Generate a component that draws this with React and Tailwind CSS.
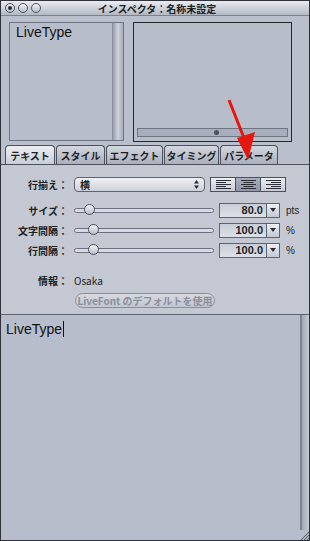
const jp = "font-['Noto_Sans_CJK_JP','Noto_Sans',sans-serif]";

function Tab({ label, active, w }) {
  return (
    <div
      className={`h-[19px] ${w} mr-px rounded-t-[4px] border border-b-0 border-[#4b505c] flex items-center justify-center text-[10px] font-bold text-[#1d1f24] ${
        active
          ? "bg-gradient-to-b from-[#eceef2] to-[#c9cdd7]"
          : "bg-gradient-to-b from-[#d3d7df] to-[#a9afbc]"
      }`}
    >
      {label}
    </div>
  );
}

function SliderRow({ label, value, unit, knob }) {
  return (
    <div className="flex items-center h-[20px]">
      <div className="w-[73px] text-right pr-[6px] text-[10px] font-bold text-[#1d1f24]">{label}</div>
      <div className="relative w-[140px] h-[5px] rounded-full border border-[#6b7080] bg-[#d7dae2]">
        <div
          className="absolute top-[-5px] w-[11px] h-[11px] rounded-full border border-[#4b505c] bg-gradient-to-b from-[#f4f5f8] to-[#b9beca]"
          style={{ left: knob }}
        />
      </div>
      <div className="ml-[5px] flex h-[15px] border border-[#5e6372] bg-[#d2d6df]">
        <div className="w-[46px] text-right pr-[3px] text-[11px] font-bold leading-[13px] text-[#1d1f24] font-['Liberation_Sans',sans-serif] bg-gradient-to-b from-[#c9cdd7] to-[#dcdfe6]">
          {value}
        </div>
        <div className="w-[13px] border-l border-[#5e6372] flex items-center justify-center bg-gradient-to-b from-[#eef0f3] to-[#c2c7d2]">
          <svg width="6" height="4" viewBox="0 0 6 4"><path d="M0 0h6L3 4z" fill="#2a2d35" /></svg>
        </div>
      </div>
      <div className="ml-[6px] text-[10px] text-[#1d1f24] font-['Liberation_Sans',sans-serif]">{unit}</div>
    </div>
  );
}

function AlignIcon({ mode }) {
  const rows = [0, 2, 4, 6, 8];
  return (
    <svg width="15" height="9" viewBox="0 0 15 9">
      {rows.map((y, i) => {
        const l = i % 2 === 0 ? 15 : 10;
        const x = mode === "left" ? 0 : mode === "center" ? (15 - l) / 2 : 15 - l;
        return <rect key={i} x={x} y={y} width={l} height="1" fill="#2a2d35" />;
      })}
    </svg>
  );
}

export default function App() {
  return (
    <div className={`relative w-[310px] h-[541px] bg-[#2f323b] p-px flex flex-col ${jp}`}>
      {/* title bar */}
      <div className="h-[15px] flex items-center bg-gradient-to-b from-[#e9ebef] to-[#b4b9c4] border-b border-[#7c8190] relative">
        <div className="flex gap-[3px] pl-[4px]">
          {[0, 1, 2].map((i) => (
            <div
              key={i}
              className="w-[10px] h-[10px] rounded-full border border-[#4d515c] bg-gradient-to-b from-[#f2f3f6] to-[#b7bcc7] flex items-center justify-center"
            >
              {i === 0 && <div className="w-[4px] h-[4px] rounded-full bg-[#2b2e36]" />}
            </div>
          ))}
        </div>
        <div className="absolute left-0 right-0 top-0 h-[15px] flex items-center justify-center text-[10px] font-bold text-[#1d1f24] pl-[4px]">
          インスペクタ：名称未設定
        </div>
      </div>

      {/* top area */}
      <div className="bg-[#b9bfcb] flex flex-col">
        <div className="flex pt-[6px] pl-[8px] h-[128px]">
          <div className="w-[115px] h-[119px] border border-[#6f7482] bg-[#b7bdc9] flex">
            <div className="flex-1 pl-[6px] pt-[1px] text-[14px] leading-[17px] text-[#111] font-['Liberation_Sans',sans-serif]">
              LiveType
            </div>
            <div className="w-[11px] border-l border-[#8a8f9c] bg-gradient-to-r from-[#9aa0ad] via-[#cfd2da] to-[#a6acb8]" />
          </div>
          <div className="ml-[9px] w-[159px] h-[120px] border border-[#26282e] bg-[#b8bec9] flex flex-col justify-end p-[3px] pb-[4px]">
            <div className="h-[9px] border border-[#6f7482] bg-[#a8aebb] flex items-center justify-center pl-[8px]">
              <div className="w-[5px] h-[5px] rounded-full bg-[#4d515c]" />
            </div>
          </div>
        </div>
        {/* tabs */}
        <div className="flex items-end pl-[4px] h-[20px]">
          <Tab label="テキスト" active w="w-[50px]" />
          <Tab label="スタイル" w="w-[49px]" />
          <Tab label="エフェクト" w="w-[57px]" />
          <Tab label="タイミング" w="w-[55px]" />
          <Tab label="パラメータ" w="w-[58px]" />
        </div>
      </div>

      {/* parameters panel */}
      <div className="bg-[#c3c8d3] border-t border-[#4b505c] h-[150px] flex flex-col pt-[11px]">
        <div className="flex items-center h-[16px]">
          <div className="w-[73px] text-right pr-[6px] text-[10px] font-bold text-[#1d1f24]">行揃え：</div>
          <div className="w-[131px] h-[15px] rounded-[4px] border border-[#5e6372] bg-gradient-to-b from-[#f0f1f4] to-[#cdd1da] flex items-center justify-between px-[5px]">
            <span className="text-[10px] font-bold text-[#1d1f24]">横</span>
            <svg width="5" height="9" viewBox="0 0 5 9">
              <path d="M0 3.5L2.5 0 5 3.5z M0 5.5L2.5 9 5 5.5z" fill="#2a2d35" />
            </svg>
          </div>
          <div className="ml-[5px] flex h-[15px] border border-[#4b505c]">
            <div className="w-[25px] flex items-center justify-center bg-gradient-to-b from-[#eef0f3] to-[#c5cad4] border-r border-[#4b505c]">
              <AlignIcon mode="left" />
            </div>
            <div className="w-[25px] flex items-center justify-center bg-gradient-to-b from-[#a9afbc] to-[#8e95a4] border-r border-[#4b505c]">
              <AlignIcon mode="center" />
            </div>
            <div className="w-[24px] flex items-center justify-center bg-gradient-to-b from-[#eef0f3] to-[#c5cad4]">
              <AlignIcon mode="right" />
            </div>
          </div>
        </div>
        <div className="mt-[8px] flex flex-col">
          <SliderRow label="サイズ：" value="80.0" unit="pts" knob={9} />
          <SliderRow label="文字間隔：" value="100.0" unit="%" knob={13} />
          <SliderRow label="行間隔：" value="100.0" unit="%" knob={13} />
        </div>
        <div className="mt-[13px] flex items-center h-[14px]">
          <div className="w-[73px] text-right pr-[6px] text-[10px] font-bold text-[#1d1f24]">情報：</div>
          <div className="text-[10px] text-[#1d1f24]">Osaka</div>
        </div>
        <div className="mt-[6px] ml-[74px] w-[140px] h-[15px] rounded-full border border-[#8a8f9c] bg-gradient-to-b from-[#d6d9e0] to-[#c2c6d0] flex items-center justify-center text-[10px] font-bold text-[#8a8f9c]">
          LiveFont のデフォルトを使用
        </div>
      </div>

      {/* text area */}
      <div className="flex-1 border-t border-[#5e6372] bg-[#b7bdca] flex">
        <div className="flex-1 pl-[5px]">
          <span className="text-[14px] leading-[16px] text-[#111] font-['Liberation_Sans',sans-serif] border-r border-[#111] pr-px">
            LiveType
          </span>
        </div>
        <div className="w-[10px] flex flex-col">
          <div className="flex-1 ml-[1px] border-l-2 border-[#7d8391] bg-gradient-to-r from-[#a3a9b6] to-[#c6cad3]" />
          <div className="h-[10px] flex items-end justify-end">
            <svg width="9" height="9" viewBox="0 0 9 9">
              <path d="M1 9L9 1M4 9L9 4M7 9L9 7" stroke="#4b505c" strokeWidth="1" />
            </svg>
          </div>
        </div>
      </div>

      {/* red arrow annotation */}
      <svg className="absolute left-0 top-0 pointer-events-none" width="310" height="541" viewBox="0 0 310 541">
        <path d="M229 100L244 138" stroke="#e5170f" strokeWidth="3" />
        <path d="M237 138L255 132L248 160z" fill="#e5170f" />
      </svg>
    </div>
  );
}
